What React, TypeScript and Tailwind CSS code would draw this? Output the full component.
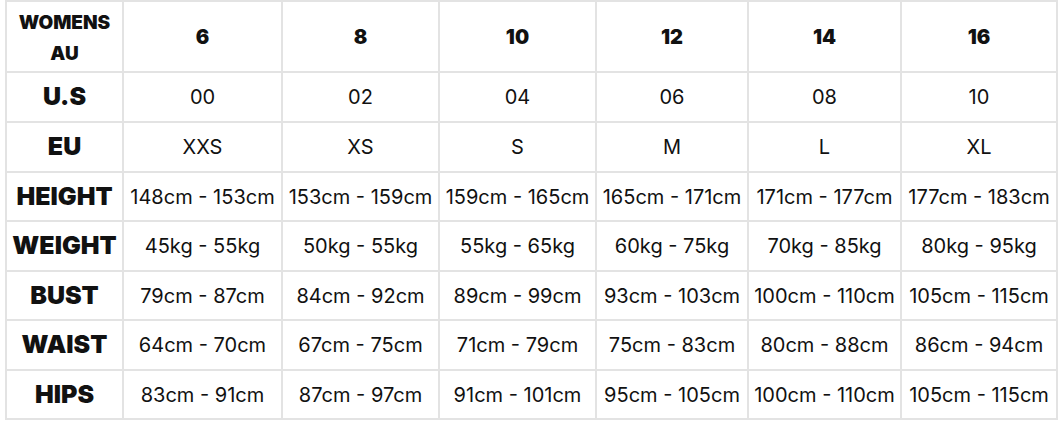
import { Fragment } from 'react'

const sizes = ['6', '8', '10', '12', '14', '16']

const rows = [
  { label: 'U.S', values: ['00', '02', '04', '06', '08', '10'] },
  { label: 'EU', values: ['XXS', 'XS', 'S', 'M', 'L', 'XL'] },
  {
    label: 'HEIGHT',
    values: ['148cm - 153cm', '153cm - 159cm', '159cm - 165cm', '165cm - 171cm', '171cm - 177cm', '177cm - 183cm'],
  },
  {
    label: 'WEIGHT',
    values: ['45kg - 55kg', '50kg - 55kg', '55kg - 65kg', '60kg - 75kg', '70kg - 85kg', '80kg - 95kg'],
  },
  {
    label: 'BUST',
    values: ['79cm - 87cm', '84cm - 92cm', '89cm - 99cm', '93cm - 103cm', '100cm - 110cm', '105cm - 115cm'],
  },
  {
    label: 'WAIST',
    values: ['64cm - 70cm', '67cm - 75cm', '71cm - 79cm', '75cm - 83cm', '80cm - 88cm', '86cm - 94cm'],
  },
  {
    label: 'HIPS',
    values: ['83cm - 91cm', '87cm - 97cm', '91cm - 101cm', '95cm - 105cm', '100cm - 110cm', '105cm - 115cm'],
  },
]

export default function App() {
  return (
    <div className="h-[422px] w-[1062px] bg-white pl-[5px] text-[#111] [font-family:Inter,'Noto_Sans',sans-serif]">
      <div className="inline-grid grid-cols-[115px_157px_155px_155px_150px_151px_154px] grid-rows-[69px_48px_48px_47px_48px_47px_48px_47px] gap-[2px] bg-[#e3e3e3] p-[2px]">
        <div className="flex flex-col items-center justify-center bg-white pt-[2px] text-center text-[19px] font-black leading-[31px]">
          <span>WOMENS</span>
          <span>AU</span>
        </div>
        {sizes.map((size) => (
          <div key={size} className="flex items-center justify-center bg-white text-[20px] font-black">
            {size}
          </div>
        ))}
        {rows.map((row) => (
          <Fragment key={row.label}>
            <div className="flex items-center justify-center whitespace-nowrap bg-white text-[25px] font-black">
              {row.label}
            </div>
            {row.values.map((value, i) => (
              <div
                key={row.label + i}
                className="flex items-center justify-center whitespace-nowrap bg-white text-[20px]"
              >
                {value}
              </div>
            ))}
          </Fragment>
        ))}
      </div>
    </div>
  )
}
